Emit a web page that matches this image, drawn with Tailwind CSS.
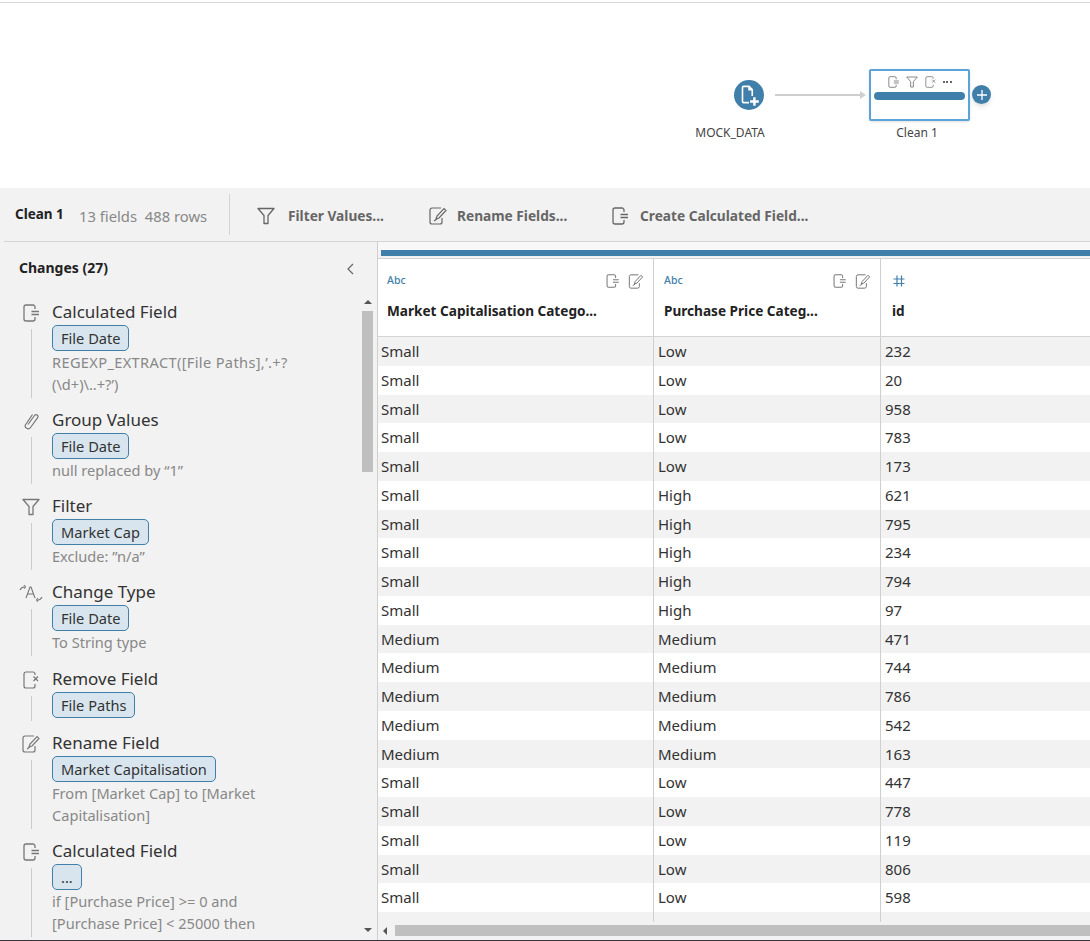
<!DOCTYPE html>
<html lang="en">
<head>
    <meta charset="UTF-8">
    <title>Clean 1 - Flow</title>
    <script src="https://cdn.jsdelivr.net/npm/@tailwindcss/browser@4"></script>
</head>
<body class="bg-white">
    <svg class="hidden">
        <defs>
            <symbol id="calc" viewBox="0 0 16 18"><path d="M12 5V3a2 2 0 0 0-2-2H3a2 2 0 0 0-2 2v12a2 2 0 0 0 2 2h7a2 2 0 0 0 2-2v-2M8.500 7.500H16M8.500 10.500H16" fill="none" stroke="currentColor" stroke-width="1.300"/></symbol>
            <symbol id="funnel" viewBox="0 0 18 18"><path d="M1 1.500h16l-6 7v8h-4v-8z" fill="none" stroke="currentColor" stroke-width="1.300" stroke-linejoin="round"/></symbol>
            <symbol id="rename" viewBox="0 0 18 18"><path d="M12 1H3a2 2 0 0 0-2 2v12a2 2 0 0 0 2 2h8a2 2 0 0 0 2-2v-4M7 12l1-3 7-7.500 2 2-7 7.500zM5 14l3-2" fill="none" stroke="currentColor" stroke-width="1.200"/></symbol>
            <symbol id="remove" viewBox="0 0 16 18"><path d="M12 4V3a2 2 0 0 0-2-2H3a2 2 0 0 0-2 2v12a2 2 0 0 0 2 2h7a2 2 0 0 0 2-2v-2M10.500 5.500l4.500 4.500M15 5.500 10.500 10" fill="none" stroke="currentColor" stroke-width="1.200"/></symbol>
            <symbol id="clip" viewBox="0 0 16 18"><path d="M5 12.500 11.500 3.500c1.500-2 4.500 0 3 2.300L7.500 15.500c-2 2.800-6.500.3-5-2.800L9.500 2.500" fill="none" stroke="currentColor" stroke-width="1.200"/></symbol>
            <symbol id="ctype" viewBox="0 0 24 18"><path d="M1 6c1-2 3-3 4-3M5 1l1.500 2L5 4.500M7 14l4-11h1l4 11M8.500 10h6M23 13c-1 2-3 3-4 3M19 14l-1.500 2 1.500 1.500" fill="none" stroke="currentColor" stroke-width="1.100"/></symbol>
        </defs>
    </svg>

    <div class="w-[1090px] h-[941px] overflow-hidden flex flex-col font-['Noto_Sans',sans-serif]">
        <!-- Flow canvas -->
        <div class="relative h-[186px] shrink-0 mt-[2px] border-t border-[#d9d9d9] bg-white">
            <div class="absolute left-[734px] top-[77px] w-[30px] h-[30px] rounded-full bg-[#3f7fa9] flex items-center justify-center">
                <svg width="26" height="26" viewBox="0 0 24 24" fill="none" stroke="white" stroke-width="1.500"><path d="M12 19H7a1 1 0 0 1-1-1V5a1 1 0 0 1 1-1h5l3 3v6M12 4v3h3"/><path d="M17 14v8M13 18h8" stroke-width="2.200"/></svg>
            </div>
            <div class="absolute left-[691px] top-[122px] w-[78px] text-center text-xs text-[#444] leading-4">MOCK_DATA</div>
            <div class="absolute left-[775px] top-[91px] w-[87px] h-[2px] bg-[#cfcfcf]"></div>
            <div class="absolute left-[860px] top-[88px] w-0 h-0 border-y-[4px] border-y-transparent border-l-[6px] border-l-[#cfcfcf]"></div>
            <div class="absolute left-[869px] top-[66px] w-[101px] h-[52px] border-2 border-[#5ba3d9] rounded-[2px] bg-white shadow-sm">
                <div class="flex items-center justify-center gap-[7px] pt-[3px] h-[18px] text-[#777]">
                    <svg width="11" height="12"><use href="#calc"/></svg>
                    <svg width="12" height="12"><use href="#funnel"/></svg>
                    <svg width="11" height="12"><use href="#remove"/></svg>
                    <span class="flex gap-[1.500px]"><i class="w-[2px] h-[2px] bg-[#666]"></i><i class="w-[2px] h-[2px] bg-[#666]"></i><i class="w-[2px] h-[2px] bg-[#666]"></i></span>
                </div>
                <div class="ml-[3px] mr-[3px] mt-[3px] h-[8px] rounded-full bg-[#3f7fa9]"></div>
            </div>
            <div class="absolute left-[972px] top-[82px] w-[19px] h-[19px] rounded-full bg-[#3f7fa9] shadow-md flex items-center justify-center">
                <svg width="12" height="12" viewBox="0 0 12 12" stroke="white" stroke-width="1.300"><path d="M6 1v10M1 6h10"/></svg>
            </div>
            <div class="absolute left-[878px] top-[122px] w-[78px] text-center text-xs text-[#444] leading-4">Clean 1</div>
        </div>

        <!-- Toolbar -->
        <div class="h-[53px] shrink-0 bg-[#f2f2f2] flex items-center text-[13.700px]">
            <span class="ml-[15px] w-[64px] text-[13.500px] font-bold text-[#222] -mt-[1px]">Clean 1</span>
            <span class="w-[150px] text-[14.800px] text-[#888] mt-[3px]">13 fields&nbsp; 488 rows</span>
            <div class="w-px h-[41px] bg-[#d4d4d4]"></div>
            <div class="flex items-center ml-[27px] w-[172px] text-[#666] font-bold mt-[3px]">
                <svg width="18" height="18" class="mr-[13px] text-[#666] shrink-0"><use href="#funnel"/></svg>Filter Values...
            </div>
            <div class="flex items-center w-[183px] text-[#666] font-bold mt-[3px]">
                <svg width="18" height="18" class="mr-[10px] shrink-0"><use href="#rename"/></svg>Rename Fields...
            </div>
            <div class="flex items-center text-[#666] font-bold mt-[3px]">
                <svg width="16" height="18" class="mr-[12px] shrink-0"><use href="#calc"/></svg>Create Calculated Field...
            </div>
        </div>

        <div class="flex flex-1 min-h-0 bg-[#f2f2f2] border-b border-[#3b3138]">
            <!-- Changes pane -->
            <div class="w-[377px] shrink-0 flex flex-col ml-[4px] border-t border-[#d4d4d4] -mr-[4px]">
                <div class="h-[57px] shrink-0 flex items-center justify-between pl-[15px] pr-[27px] pt-[1px] text-sm font-bold text-[#222]">
                    <span class="-mt-[6px]">Changes (27)</span>
                    <svg width="8" height="12" viewBox="0 0 8 12" fill="none" stroke="#666" stroke-width="1.200" class="-mt-[5px]"><path d="M7 1 2 6l5 5"/></svg>
                </div>
                <div class="flex flex-1 min-h-0 relative">
                    <div class="flex-1 overflow-hidden text-[#888] text-[14.600px] leading-[22px]">

                        <div class="flex pb-[12px] -ml-[4px]">
                            <div class="w-[52px] shrink-0 pl-[10px] flex flex-col items-center text-[#777]"><svg width="16" height="18" class="mt-[5px]"><use href="#calc"/></svg><div class="w-px flex-1 mt-[7px] -mb-[3px] bg-[#ccc]"></div></div>
                            <div class="w-[270px]">
                                <div class="text-[17px] leading-[26px] text-[#333]">Calculated Field</div>
                                <div class="w-fit h-[26px] px-[8px] rounded-[5px] border border-[#3f7fa9] bg-[#d8e5ee] text-[#333] flex items-center">File Date</div>
                                <div><span class="tracking-[0.350px]">REGEXP_EXTRACT([File Paths],’.+?</span><br>(\d+)\..+?’)</div>
                            </div>
                        </div>

                        <div class="flex pb-[12px] -ml-[4px]">
                            <div class="w-[52px] shrink-0 pl-[10px] flex flex-col items-center text-[#777]"><svg width="16" height="18" class="mt-[5px]"><use href="#clip"/></svg><div class="w-px flex-1 mt-[7px] -mb-[3px] bg-[#ccc]"></div></div>
                            <div class="w-[270px]">
                                <div class="text-[17px] leading-[26px] text-[#333]">Group Values</div>
                                <div class="w-fit h-[26px] px-[8px] rounded-[5px] border border-[#3f7fa9] bg-[#d8e5ee] text-[#333] flex items-center">File Date</div>
                                <div>null replaced by “1”</div>
                            </div>
                        </div>

                        <div class="flex pb-[12px] -ml-[4px]">
                            <div class="w-[52px] shrink-0 pl-[10px] flex flex-col items-center text-[#777]"><svg width="18" height="18" class="mt-[5px]"><use href="#funnel"/></svg><div class="w-px flex-1 mt-[7px] -mb-[3px] bg-[#ccc]"></div></div>
                            <div class="w-[270px]">
                                <div class="text-[17px] leading-[26px] text-[#333]">Filter</div>
                                <div class="w-fit h-[26px] px-[8px] rounded-[5px] border border-[#3f7fa9] bg-[#d8e5ee] text-[#333] flex items-center">Market Cap</div>
                                <div>Exclude: ”n/a”</div>
                            </div>
                        </div>

                        <div class="flex pb-[13px] -ml-[4px]">
                            <div class="w-[52px] shrink-0 pl-[10px] flex flex-col items-center text-[#777]"><svg width="24" height="18" class="mt-[5px]"><use href="#ctype"/></svg><div class="w-px flex-1 mt-[7px] -mb-[3px] bg-[#ccc]"></div></div>
                            <div class="w-[270px]">
                                <div class="text-[17px] leading-[26px] text-[#333]">Change Type</div>
                                <div class="w-fit h-[26px] px-[8px] rounded-[5px] border border-[#3f7fa9] bg-[#d8e5ee] text-[#333] flex items-center">File Date</div>
                                <div>To String type</div>
                            </div>
                        </div>

                        <div class="flex pb-[12px] -ml-[4px]">
                            <div class="w-[52px] shrink-0 pl-[10px] flex flex-col items-center text-[#777]"><svg width="16" height="18" class="mt-[5px]"><use href="#remove"/></svg><div class="w-px flex-1 mt-[7px] -mb-[3px] bg-[#ccc]"></div></div>
                            <div class="w-[270px]">
                                <div class="text-[17px] leading-[26px] text-[#333]">Remove Field</div>
                                <div class="w-fit h-[26px] px-[8px] rounded-[5px] border border-[#3f7fa9] bg-[#d8e5ee] text-[#333] flex items-center">File Paths</div>
                            </div>
                        </div>

                        <div class="flex pb-[12px] -ml-[4px]">
                            <div class="w-[52px] shrink-0 pl-[10px] flex flex-col items-center text-[#777]"><svg width="18" height="18" class="mt-[5px]"><use href="#rename"/></svg><div class="w-px flex-1 mt-[7px] -mb-[3px] bg-[#ccc]"></div></div>
                            <div class="w-[270px]">
                                <div class="text-[17px] leading-[26px] text-[#333]">Rename Field</div>
                                <div class="w-fit h-[26px] px-[8px] rounded-[5px] border border-[#3f7fa9] bg-[#d8e5ee] text-[#333] flex items-center">Market Capitalisation</div>
                                <div>From [Market Cap] to [Market<br>Capitalisation]</div>
                            </div>
                        </div>

                        <div class="flex pb-[12px] -ml-[4px]">
                            <div class="w-[52px] shrink-0 pl-[10px] flex flex-col items-center text-[#777]"><svg width="16" height="18" class="mt-[5px]"><use href="#calc"/></svg><div class="w-px flex-1 mt-[7px] -mb-[3px] bg-[#ccc]"></div></div>
                            <div class="w-[270px]">
                                <div class="text-[17px] leading-[26px] text-[#333]">Calculated Field</div>
                                <div class="w-fit h-[26px] px-[8px] rounded-[5px] border border-[#3f7fa9] bg-[#d8e5ee] text-[#333] flex items-center">...</div>
                                <div>if [Purchase Price] &gt;= 0 and<br>[Purchase Price] &lt; 25000 then</div>
                            </div>
                        </div>
                    </div>
                    <!-- pane scrollbar -->
                    <div class="w-[11px] shrink-0 mr-[8px] flex flex-col items-center relative">
                        <div class="mt-[-1px] h-[8px] flex items-center"><div class="w-0 h-0 border-x-[4px] border-x-transparent border-b-[4px] border-b-[#555]"></div></div>
                        <div class="w-[11px] h-[161px] mt-[5px] bg-[#bfbfbf]"></div>
                        <div class="flex-1"></div>
                        <div class="h-[8px] mb-[6px] flex items-center"><div class="w-0 h-0 border-x-[4px] border-x-transparent border-t-[4px] border-t-[#555]"></div></div>
                    </div>
                </div>
            </div>

            <!-- Data grid -->
            <div class="flex-1 min-w-0 border-l border-[#cfcfcf] flex flex-col border-t border-t-[#d4d4d4]">
                <div class="h-[8px] shrink-0 bg-[#f8f8f8]"></div>
                <div class="h-[6px] shrink-0 ml-[3px] bg-[#3f7fa9]"></div>
                <div class="h-[2px] shrink-0 bg-[#f2f2f2]"></div>
                <div class="h-[79px] shrink-0 bg-white border-y border-[#d4d4d4] grid grid-cols-[276px_227px_1fr]">
                    <div class="relative border-r border-[#cfcfcf] pl-[9px]">
                        <div class="h-[44px] flex items-center justify-between pr-[9px] text-[#3f7fa9] text-[10.500px] font-medium">
                            <span>Abc</span>
                            <span class="flex gap-[9px] text-[#777]"><svg width="13" height="14"><use href="#calc"/></svg><svg width="16" height="15"><use href="#rename"/></svg></span>
                        </div>
                        <div class="text-[13.600px] font-bold text-[#222] leading-[22px] -mt-[3px]">Market Capitalisation Catego...</div>
                    </div>
                    <div class="relative border-r border-[#cfcfcf] pl-[10px]">
                        <div class="h-[44px] flex items-center justify-between pr-[9px] text-[#3f7fa9] text-[10.500px] font-medium">
                            <span>Abc</span>
                            <span class="flex gap-[9px] text-[#777]"><svg width="13" height="14"><use href="#calc"/></svg><svg width="16" height="15"><use href="#rename"/></svg></span>
                        </div>
                        <div class="text-[13.600px] font-bold text-[#222] leading-[22px] -mt-[3px]">Purchase Price Categ...</div>
                    </div>
                    <div class="pl-[11px]">
                        <div class="h-[44px] flex items-center text-[#3f7fa9]">
                            <svg width="14" height="14" viewBox="0 0 14 14" stroke="currentColor" stroke-width="1.200"><path d="M5 1.500v11M9.500 1.500v11M1.500 5h11M1.500 9.500h11"/></svg>
                        </div>
                        <div class="text-[13.600px] font-bold text-[#222] leading-[22px] -mt-[3px]">id</div>
                    </div>
                </div>
                <div class="h-[585px] shrink-0 overflow-hidden relative text-[15px] text-[#333] grid grid-cols-[276px_227px_1fr] auto-rows-[28.750px] leading-[29.500px]">
                    <div class="absolute left-[275px] top-0 bottom-0 w-px bg-[#cfcfcf]"></div>
                    <div class="absolute left-[502px] top-0 bottom-0 w-px bg-[#cfcfcf]"></div>
                    <div class="pl-[3px] bg-[#f2f2f2]">Small</div><div class="pl-[4px] bg-[#f2f2f2]">Low</div><div class="pl-[4px] bg-[#f2f2f2]">232</div>
                    <div class="pl-[3px] bg-white">Small</div><div class="pl-[4px] bg-white">Low</div><div class="pl-[4px] bg-white">20</div>
                    <div class="pl-[3px] bg-[#f2f2f2]">Small</div><div class="pl-[4px] bg-[#f2f2f2]">Low</div><div class="pl-[4px] bg-[#f2f2f2]">958</div>
                    <div class="pl-[3px] bg-white">Small</div><div class="pl-[4px] bg-white">Low</div><div class="pl-[4px] bg-white">783</div>
                    <div class="pl-[3px] bg-[#f2f2f2]">Small</div><div class="pl-[4px] bg-[#f2f2f2]">Low</div><div class="pl-[4px] bg-[#f2f2f2]">173</div>
                    <div class="pl-[3px] bg-white">Small</div><div class="pl-[4px] bg-white">High</div><div class="pl-[4px] bg-white">621</div>
                    <div class="pl-[3px] bg-[#f2f2f2]">Small</div><div class="pl-[4px] bg-[#f2f2f2]">High</div><div class="pl-[4px] bg-[#f2f2f2]">795</div>
                    <div class="pl-[3px] bg-white">Small</div><div class="pl-[4px] bg-white">High</div><div class="pl-[4px] bg-white">234</div>
                    <div class="pl-[3px] bg-[#f2f2f2]">Small</div><div class="pl-[4px] bg-[#f2f2f2]">High</div><div class="pl-[4px] bg-[#f2f2f2]">794</div>
                    <div class="pl-[3px] bg-white">Small</div><div class="pl-[4px] bg-white">High</div><div class="pl-[4px] bg-white">97</div>
                    <div class="pl-[3px] bg-[#f2f2f2]">Medium</div><div class="pl-[4px] bg-[#f2f2f2]">Medium</div><div class="pl-[4px] bg-[#f2f2f2]">471</div>
                    <div class="pl-[3px] bg-white">Medium</div><div class="pl-[4px] bg-white">Medium</div><div class="pl-[4px] bg-white">744</div>
                    <div class="pl-[3px] bg-[#f2f2f2]">Medium</div><div class="pl-[4px] bg-[#f2f2f2]">Medium</div><div class="pl-[4px] bg-[#f2f2f2]">786</div>
                    <div class="pl-[3px] bg-white">Medium</div><div class="pl-[4px] bg-white">Medium</div><div class="pl-[4px] bg-white">542</div>
                    <div class="pl-[3px] bg-[#f2f2f2]">Medium</div><div class="pl-[4px] bg-[#f2f2f2]">Medium</div><div class="pl-[4px] bg-[#f2f2f2]">163</div>
                    <div class="pl-[3px] bg-white">Small</div><div class="pl-[4px] bg-white">Low</div><div class="pl-[4px] bg-white">447</div>
                    <div class="pl-[3px] bg-[#f2f2f2]">Small</div><div class="pl-[4px] bg-[#f2f2f2]">Low</div><div class="pl-[4px] bg-[#f2f2f2]">778</div>
                    <div class="pl-[3px] bg-white">Small</div><div class="pl-[4px] bg-white">Low</div><div class="pl-[4px] bg-white">119</div>
                    <div class="pl-[3px] bg-[#f2f2f2]">Small</div><div class="pl-[4px] bg-[#f2f2f2]">Low</div><div class="pl-[4px] bg-[#f2f2f2]">806</div>
                    <div class="pl-[3px] bg-white">Small</div><div class="pl-[4px] bg-white">Low</div><div class="pl-[4px] bg-white">598</div>
                </div>
                <!-- bottom scrollbar -->
                <div class="flex-1 flex items-center pl-[5px] pb-[1px]">
                    <div class="w-0 h-0 border-y-[4px] border-y-transparent border-r-[4px] border-r-[#555]"></div>
                    <div class="flex-1 h-[11px] ml-[8px] bg-[#bfbfbf]"></div>
                </div>
            </div>
        </div>
    </div>
</body>
</html>
